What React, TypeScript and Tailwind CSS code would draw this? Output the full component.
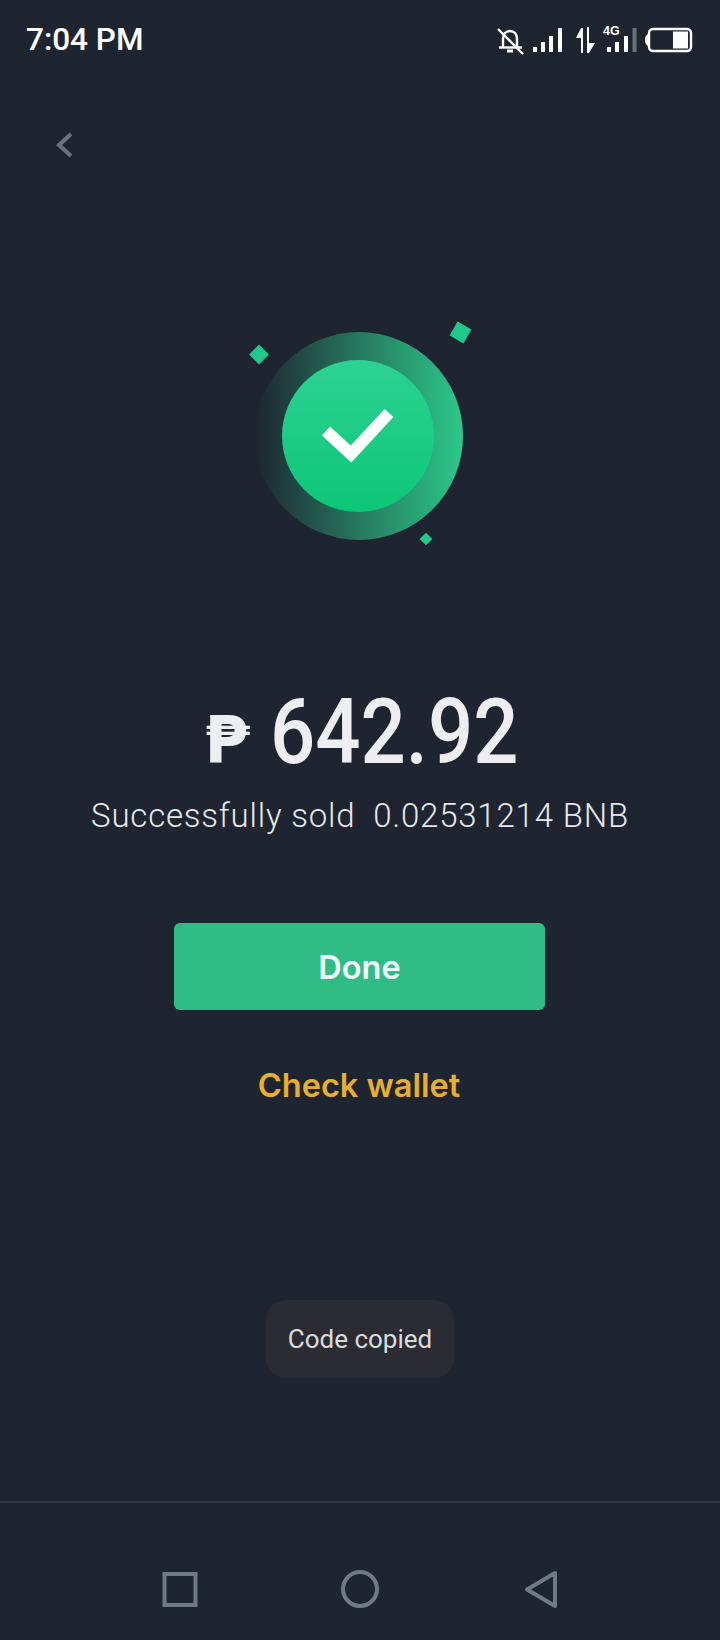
const StatusIcons = () => (
  <svg width="197" height="32" viewBox="496 23 197 32" fill="none">
    {/* muted bell */}
    <g stroke="#fff" strokeWidth="2.4">
      <path d="M503 46V38c0-5 3-8 7-8s7 3 7 8v8" />
      <path d="M499 46.500h23" />
      <path d="M498 28l25 25" />
      <path d="M507 50h6" strokeWidth="3" />
    </g>
    {/* signal 1 */}
    <g fill="#fff">
      <rect x="533" y="46" width="4" height="5" />
      <rect x="541" y="41" width="4" height="10" />
      <rect x="549" y="35" width="4" height="16" />
      <rect x="558" y="27" width="4" height="24" />
    </g>
    {/* data arrows */}
    <path d="M581 27v25h2V27zM581 27l-5 10h5z" fill="#fff" />
    <path d="M587 26v26h2V26zM589 52l6-10h-6z" fill="#fff" />
    {/* signal 2 */}
    <text x="603" y="33.500" fill="#fff" fontSize="12.500" fontWeight="700" fontFamily="'Liberation Sans', sans-serif">4G</text>
    <g fill="#fff">
      <rect x="607" y="46" width="4" height="5" />
      <rect x="615" y="41" width="4" height="10" />
      <rect x="624" y="35" width="4" height="16" />
    </g>
    <rect x="632.500" y="27" width="4" height="24" fill="#6b7076" />
    {/* battery */}
    <path d="M648 33c-2 1-3 3-3 6s1 5 3 6z" fill="#fff" />
    <rect x="649" y="28" width="42" height="22" rx="4" stroke="#fff" strokeWidth="2.400" />
    <rect x="673" y="30.500" width="15" height="17" fill="#fff" />
  </svg>
);

const SuccessBadge = () => (
  <svg width="240" height="240" viewBox="240 320 240 240" fill="none">
    <defs>
      <linearGradient id="ring" x1="0" y1="0" x2="1" y2="0">
        <stop offset="0" stopColor="#2dbe85" stopOpacity="0" />
        <stop offset="0.5" stopColor="#2dbe85" stopOpacity="0.55" />
        <stop offset="1" stopColor="#2cc98c" />
      </linearGradient>
      <linearGradient id="disc" x1="0" y1="0" x2="0" y2="1">
        <stop offset="0" stopColor="#2dd293" />
        <stop offset="1" stopColor="#0cc677" />
      </linearGradient>
    </defs>
    <circle cx="359" cy="436" r="104" fill="url(#ring)" />
    <circle cx="358" cy="436" r="76" fill="url(#disc)" />
    <path d="M326 431l25 23 38-41" stroke="#fff" strokeWidth="12" />
    <rect x="452.500" y="324.500" width="16" height="16" fill="#1fc98a" transform="rotate(30 460.500 332.500)" />
    <rect x="252" y="347.500" width="14" height="14" fill="#1fc98a" transform="rotate(45 259 354.500)" />
    <rect x="421.500" y="534.500" width="9" height="9" fill="#1fc98a" transform="rotate(45 426 539)" />
  </svg>
);

const App = () => {
  return (
    <div className="w-[720px] h-[1640px] bg-[#1e2530] flex flex-col overflow-hidden">
      <div className="flex items-center justify-between h-[80px] pl-[26px] pr-[27px]">
        <span className="text-[31.500px] leading-[80px] font-medium font-['Roboto',sans-serif] text-white">7:04 PM</span>
        <StatusIcons />
      </div>

      <div className="pl-[54px] pt-[52px] h-[90px]">
        <svg width="20" height="26" viewBox="0 0 20 26" fill="none">
          <path d="M17 2L5 13l12 11" stroke="#6b727c" strokeWidth="4" />
        </svg>
      </div>

      <div className="flex flex-col items-center">
        <div className="mt-[150px]">
          <SuccessBadge />
        </div>

        <div className="flex items-baseline justify-center gap-[20px] mt-[127px] h-[90px] leading-[90px] text-[#eceef1]">
          <span className="text-[65px] font-bold font-['DejaVu_Sans',sans-serif]">₱</span>
          <span className="w-[246px] text-[91px] font-medium font-['Roboto',sans-serif] origin-left scale-x-[0.875]">642.92</span>
        </div>
        <p className="mt-[15px] text-[33px] leading-[48px] font-light font-['Roboto',sans-serif] tracking-[0.8px] text-[#e6e9ee] whitespace-pre">
          Successfully sold  0.02531214 BNB
        </p>

        <button className="mt-[83px] mr-[1px] w-[371px] h-[87px] pt-[3px] rounded-[6px] bg-[#2fbd85] text-[32.500px] font-semibold font-['Inter',sans-serif] text-[#f1fbf7]">
          Done
        </button>
        <p className="mt-[52px] mr-[2px] text-[32.500px] leading-[48px] font-semibold font-['Inter',sans-serif] text-[#e8b02a]">
          Check wallet
        </p>

        <div className="mt-[190px] w-[188px] h-[78px] rounded-[20px] bg-[#2b2c33] flex items-center justify-center text-[26px] font-['Roboto',sans-serif] text-[#dadbdd]">
          Code copied
        </div>
      </div>

      <div className="mt-auto h-[139px] border-t-2 border-[#333b46] flex items-start justify-center gap-[140px] pt-[66px]">
        <svg width="40" height="40" viewBox="0 0 40 40" fill="none">
          <rect x="4.500" y="5" width="31" height="31" stroke="#6f7a84" strokeWidth="4" />
        </svg>
        <svg width="40" height="40" viewBox="0 0 40 40" fill="none">
          <circle cx="20" cy="20" r="17" stroke="#6f7a84" strokeWidth="4" />
        </svg>
        <svg width="40" height="40" viewBox="0 0 40 40" fill="none">
          <path d="M35 4v33L7 20.500z" stroke="#6f7a84" strokeWidth="4" strokeLinejoin="round" />
        </svg>
      </div>
    </div>
  );
};

export default App;
